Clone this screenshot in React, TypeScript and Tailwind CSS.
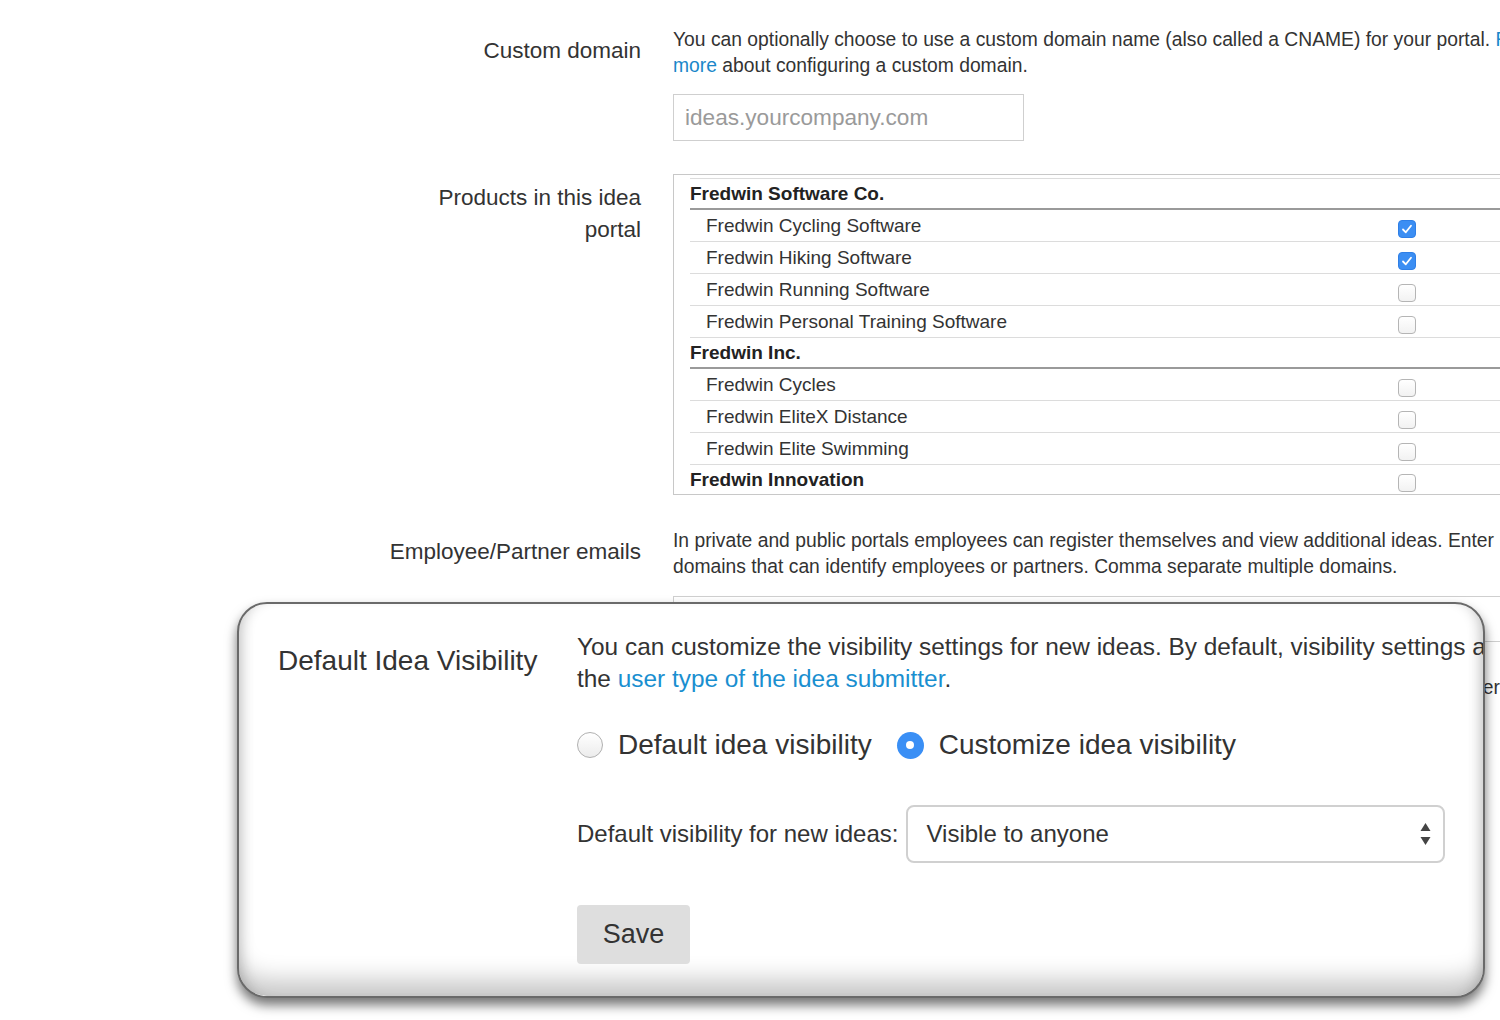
import React from "react";

const font = { fontFamily: '"Liberation Sans", Arial, Helvetica, sans-serif' };

function Check({ checked }: { checked?: boolean }) {
  if (checked) {
    return (
      <div className="w-[18px] h-[18px] rounded-[4px] bg-[#3b8ef3] border border-[#2f7fe6] flex items-center justify-center">
        <svg width="14" height="14" viewBox="0 0 14 14">
          <path d="M3 7.5 L5.8 10.3 L11 3.8" stroke="white" strokeWidth="1.8" fill="none" strokeLinecap="round" strokeLinejoin="round" />
        </svg>
      </div>
    );
  }
  return <div className="w-[18px] h-[18px] rounded-[4px] border border-[#b5b5b5] bg-gradient-to-b from-white to-[#f2f2f2]" />;
}

function Item({ label, checked }: { label: string; checked?: boolean }) {
  return (
    <div className="flex h-[32px] border-b border-[#dcdcdc]">
      <div className="w-[708px] pl-4 text-[19px] leading-[31px] text-[#333]">{label}</div>
      <div className="mt-[10px]">
        <Check checked={checked} />
      </div>
    </div>
  );
}

function Header({ label, border = true, box }: { label: string; border?: boolean; box?: boolean }) {
  return (
    <div className={border ? "flex h-[31px] border-b-2 border-[#9a9a9a]" : "flex h-[30px]"}>
      <div className="w-[708px] text-[19px] leading-[30px] font-bold text-[#222]">{label}</div>
      {box && (
        <div className="mt-[9px]">
          <Check />
        </div>
      )}
    </div>
  );
}

export default function App() {
  return (
    <div className="relative w-[1500px] h-[1020px] overflow-hidden bg-white text-[#333]" style={font}>
      {/* Background page */}
      <div className="pt-[27px] flex flex-col">
        {/* Custom domain */}
        <div className="grid grid-cols-[641px_880px] gap-x-8">
          <div className="pt-2 text-right text-[22.5px] leading-[32px] text-[#333]">Custom domain</div>
          <div>
            <div className="text-[19.3px] leading-[26px] whitespace-nowrap">
              You can optionally choose to use a custom domain name (also called a CNAME) for your portal.{" "}
              <span className="text-[#1a87c9]">Read</span>
              <br />
              <span className="text-[#1a87c9]">more</span> about configuring a custom domain.
            </div>
            <input
              readOnly
              placeholder="ideas.yourcompany.com"
              className="mt-[15px] block w-[351px] h-[47px] border border-[#cfcfcf] px-[11px] text-[22.6px] placeholder:text-[#9a9a9a] outline-none"
              style={font}
            />
          </div>
        </div>

        {/* Products */}
        <div className="grid grid-cols-[641px_880px] gap-x-8 mt-[33px]">
          <div className="pt-2 text-right text-[22.5px] leading-[32px] text-[#333]">
            Products in this idea
            <br />
            portal
          </div>
          <div className="h-[321px] border border-[#c8c8c8] overflow-hidden pl-4">
            <div className="-mt-[28px]">
              <Item label="Fredwin Shoes" />
              <Header label="Fredwin Software Co." />
              <Item label="Fredwin Cycling Software" checked />
              <Item label="Fredwin Hiking Software" checked />
              <Item label="Fredwin Running Software" />
              <Item label="Fredwin Personal Training Software" />
              <Header label="Fredwin Inc." />
              <Item label="Fredwin Cycles" />
              <Item label="Fredwin EliteX Distance" />
              <Item label="Fredwin Elite Swimming" />
              <Header label="Fredwin Innovation" border={false} box />
            </div>
          </div>
        </div>

        {/* Employee emails */}
        <div className="grid grid-cols-[641px_880px] gap-x-8 mt-[33px]">
          <div className="pt-2 text-right text-[22.5px] leading-[32px] text-[#333] whitespace-nowrap">Employee/Partner emails</div>
          <div>
            <div className="text-[19.3px] leading-[26px] whitespace-nowrap">
              In private and public portals employees can register themselves and view additional ideas. Enter
              <br />
              domains that can identify employees or partners. Comma separate multiple domains.
            </div>
            <div className="mt-[16px] h-[46px] border border-[#cfcfcf]" />
          </div>
        </div>

        {/* Next section (mostly hidden behind the overlay) */}
        <div className="grid grid-cols-[641px_827px] gap-x-8 mt-[33px]">
          <div className="pt-2 text-right text-[22.5px] leading-[32px]">Idea visibility</div>
          <div className="flex justify-end overflow-hidden whitespace-nowrap text-[19.3px] leading-[26px]">
            <span>Ideas submitted to this portal can be seen by the user who submitted them and each partner</span>
          </div>
        </div>
      </div>

      {/* Magnified overlay */}
      <div className="absolute left-[237px] top-[602px] w-[1248px] h-[396px] rounded-[30px] bg-white overflow-hidden border-2 border-[#6a6a6a] shadow-[0_7px_12px_rgba(0,0,0,0.55),inset_0_-26px_24px_-10px_rgba(0,0,0,0.22),inset_12px_0_14px_-10px_rgba(0,0,0,0.2),inset_-12px_0_14px_-10px_rgba(0,0,0,0.2)]">
        <div className="grid grid-cols-[259px_1fr] gap-x-[40px] pl-[39px] pt-[27px]">
          <div className="pt-[14px] text-right text-[28px] leading-[32px] whitespace-nowrap text-[#333]">
            Default Idea Visibility
          </div>
          <div>
            <div className="text-[24.4px] leading-[32px] whitespace-nowrap text-[#333]">
              You can customize the visibility settings for new ideas. By default, visibility settings are based on
              <br />
              the <span className="text-[#1a8fd0]">user type of the idea submitter</span>.
            </div>

            <div className="mt-[34px] flex items-center h-[32px]">
              <div className="w-[26px] h-[26px] rounded-full border border-[#b0b0b0] bg-gradient-to-b from-white to-[#ececec]" />
              <span className="ml-[15px] text-[28px] text-[#333]">Default idea visibility</span>
              <div className="ml-[25px] w-[27px] h-[27px] rounded-full bg-[#3a8ff5] flex items-center justify-center">
                <div className="w-[8px] h-[8px] rounded-full bg-white" />
              </div>
              <span className="ml-[15px] text-[28px] text-[#333]">Customize idea visibility</span>
            </div>

            <div className="mt-[44px] flex items-center">
              <span className="text-[24px] text-[#333]">Default visibility for new ideas:</span>
              <div className="ml-[8px] w-[539px] h-[58px] border-2 border-[#d0d0d0] rounded-[8px] flex items-center justify-between pl-[18px] pr-[12px]">
                <span className="text-[24px] text-[#333]">Visible to anyone</span>
                <svg width="11" height="24" viewBox="0 0 11 24">
                  <path d="M5.5 1 L10.5 9 L0.5 9 Z" fill="#444" />
                  <path d="M5.5 23 L10.5 15 L0.5 15 Z" fill="#444" />
                </svg>
              </div>
            </div>

            <div className="mt-[42px] w-[113px] h-[59px] rounded-[4px] bg-[#dedede] flex items-center justify-center text-[27px] text-[#333]">
              Save
            </div>
          </div>
        </div>
      </div>
    </div>
  );
}
